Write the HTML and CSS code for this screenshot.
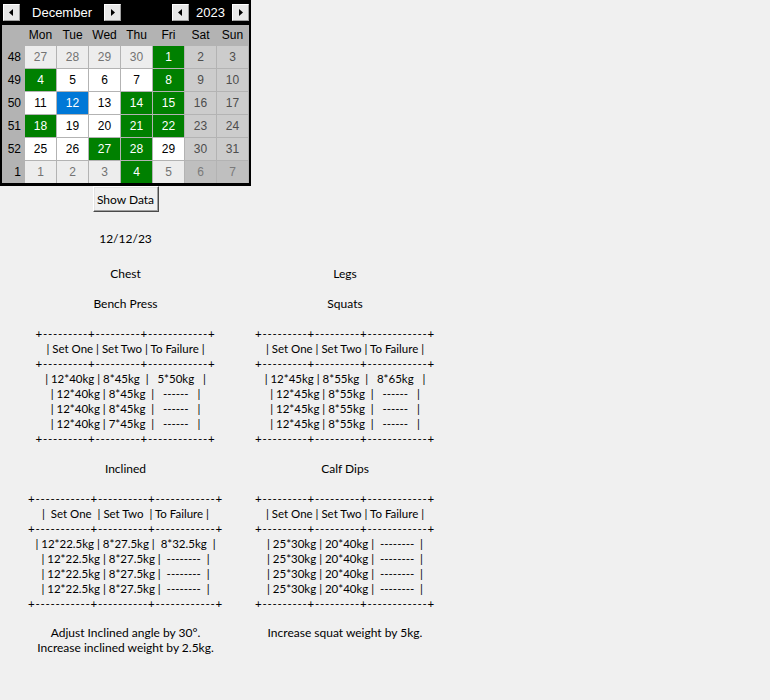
FILE: index.html
```
<!DOCTYPE html>
<html>
<head>
<meta charset="utf-8">
<link rel="stylesheet" href="styles.css">
</head>
<body>
<div class="app">
  <div class="calendar">
    <div class="cal-head">
      <div class="arrow-btn"><svg width="15" height="15" viewBox="0 0 15 15"><polygon points="9,4 5,7.5 9,11" fill="#000"/></svg></div>
      <div class="month-label">December</div>
      <div class="arrow-btn"><svg width="15" height="15" viewBox="0 0 15 15"><polygon points="6,4 10,7.5 6,11" fill="#000"/></svg></div>
      <div class="head-spacer"></div>
      <div class="arrow-btn"><svg width="15" height="15" viewBox="0 0 15 15"><polygon points="9,4 5,7.5 9,11" fill="#000"/></svg></div>
      <div class="year-label">2023</div>
      <div class="arrow-btn"><svg width="15" height="15" viewBox="0 0 15 15"><polygon points="6,4 10,7.5 6,11" fill="#000"/></svg></div>
    </div>
    <div class="cal-grid">
      <div class="hd"></div>
      <div class="hd">Mon</div><div class="hd">Tue</div><div class="hd">Wed</div><div class="hd">Thu</div><div class="hd">Fri</div><div class="hd">Sat</div><div class="hd">Sun</div>

      <div class="wk">48</div>
      <div class="d om">27</div><div class="d om">28</div><div class="d om">29</div><div class="d om">30</div><div class="d hl">1</div><div class="d we">2</div><div class="d we">3</div>

      <div class="wk">49</div>
      <div class="d hl">4</div><div class="d">5</div><div class="d">6</div><div class="d">7</div><div class="d hl">8</div><div class="d we">9</div><div class="d we">10</div>

      <div class="wk">50</div>
      <div class="d">11</div><div class="d sel">12</div><div class="d">13</div><div class="d hl">14</div><div class="d hl">15</div><div class="d we">16</div><div class="d we">17</div>

      <div class="wk">51</div>
      <div class="d hl">18</div><div class="d">19</div><div class="d">20</div><div class="d hl">21</div><div class="d hl">22</div><div class="d we">23</div><div class="d we">24</div>

      <div class="wk">52</div>
      <div class="d">25</div><div class="d">26</div><div class="d hl">27</div><div class="d hl">28</div><div class="d">29</div><div class="d we">30</div><div class="d we">31</div>

      <div class="wk">1</div>
      <div class="d om">1</div><div class="d om">2</div><div class="d om">3</div><div class="d hl">4</div><div class="d om">5</div><div class="d omwe">6</div><div class="d omwe">7</div>
    </div>
  </div>
  <div class="cell-empty"></div>

  <div class="show-btn">Show Data</div>
  <div class="cell-empty"></div>

  <div class="lbl">12/12/23</div>
  <div class="cell-empty"></div>

  <div class="lbl">Chest</div>
  <div class="lbl">Legs</div>

  <div class="lbl">Bench Press</div>
  <div class="lbl">Squats</div>

  <div class="table-text"><span class="rule">+---------+---------+------------+</span>
| Set One | Set Two | To Failure |
<span class="rule">+---------+---------+------------+</span>
| 12*40kg | 8*45kg  |   5*50kg   |
| 12*40kg | 8*45kg  |   ------   |
| 12*40kg | 8*45kg  |   ------   |
| 12*40kg | 7*45kg  |   ------   |
<span class="rule">+---------+---------+------------+</span></div>
  <div class="table-text"><span class="rule">+---------+---------+------------+</span>
| Set One | Set Two | To Failure |
<span class="rule">+---------+---------+------------+</span>
| 12*45kg | 8*55kg  |   8*65kg   |
| 12*45kg | 8*55kg  |   ------   |
| 12*45kg | 8*55kg  |   ------   |
| 12*45kg | 8*55kg  |   ------   |
<span class="rule">+---------+---------+------------+</span></div>

  <div class="lbl">Inclined</div>
  <div class="lbl">Calf Dips</div>

  <div class="table-text"><span class="rule">+-----------+----------+------------+</span>
|  Set One  | Set Two  | To Failure |
<span class="rule">+-----------+----------+------------+</span>
| 12*22.5kg | 8*27.5kg |  8*32.5kg  |
| 12*22.5kg | 8*27.5kg |  --------  |
| 12*22.5kg | 8*27.5kg |  --------  |
| 12*22.5kg | 8*27.5kg |  --------  |
<span class="rule">+-----------+----------+------------+</span></div>
  <div class="table-text"><span class="rule">+---------+---------+------------+</span>
| Set One | Set Two | To Failure |
<span class="rule">+---------+---------+------------+</span>
| 25*30kg | 20*40kg |  --------  |
| 25*30kg | 20*40kg |  --------  |
| 25*30kg | 20*40kg |  --------  |
| 25*30kg | 20*40kg |  --------  |
<span class="rule">+---------+---------+------------+</span></div>

  <div class="note">Adjust Inclined angle by 30°.
Increase inclined weight by 2.5kg.</div>
  <div class="note">Increase squat weight by 5kg.</div>
</div>
</body>
</html>
```
FILE: styles.css
```
html, body {
  margin: 0;
  padding: 0;
  background: #f0f0f0;
}

body {
  width: 770px;
  height: 700px;
  font-family: Lato, "Noto Sans", sans-serif;
  font-size: 12px;
  color: #000;
}

.app {
  display: grid;
  grid-template-columns: 251px 188px;
  grid-template-rows: 186px 26px 52px 18px 42px 123px 42px 123px auto;
  justify-items: center;
  align-items: center;
}

/* ---------- calendar ---------- */
.calendar {
  width: 251px;
  box-sizing: border-box;
  border: 2px solid #000;
  border-bottom-width: 3px;
  background: #000;
  align-self: start;
  font-family: "Liberation Sans", Arial, sans-serif;
  font-size: 12px;
}

.cal-head {
  display: flex;
  align-items: flex-start;
  height: 23px;
  box-sizing: border-box;
  padding: 2px 0 0 1px;
  background: #000;
  color: #fff;
}

.arrow-btn {
  width: 17px;
  height: 17px;
  box-sizing: border-box;
  background: #e8e8e8;
  border: 1px solid;
  border-color: #ffffff #a0a0a0 #a0a0a0 #ffffff;
  display: flex;
  align-items: center;
  justify-content: center;
}

.arrow-btn svg {
  display: block;
}

.month-label {
  width: 84px;
  text-align: center;
  font-size: 13px;
  line-height: 17px;
}

.year-label {
  width: 43px;
  text-align: center;
  font-size: 13px;
  line-height: 17px;
}

.head-spacer {
  flex: 1;
}

.cal-grid {
  display: grid;
  grid-template-columns: 22px repeat(7, 31px);
  grid-template-rows: 20px repeat(6, 22px);
  gap: 1px;
  padding-right: 1px;
  background: #b3b3b3;
}

.hd {
  background: #b3b3b3;
  color: #000;
  display: flex;
  align-items: center;
  justify-content: center;
}

.wk {
  background: #b3b3b3;
  color: #000;
  display: flex;
  align-items: center;
  justify-content: flex-end;
  padding-right: 3px;
}

.d {
  background: #ffffff;
  color: #000;
  display: flex;
  align-items: center;
  justify-content: center;
}

.d.we {
  background: #cccccc;
  color: #4d4d4d;
}

.d.om {
  background: #ededed;
  color: #737373;
}

.d.omwe {
  background: #bfbfbf;
  color: #7a7a7a;
}

.d.hl {
  background: #008000;
  color: #ffffff;
}

.d.sel {
  background: #0078d7;
  color: #ffffff;
}

/* ---------- content ---------- */
.show-btn {
  width: 66px;
  height: 26px;
  box-sizing: border-box;
  background: #f0f0f0;
  border: 1px solid;
  border-color: #ffffff #4a4a4a #4a4a4a #ffffff;
  box-shadow: inset -1px -1px 0 #a0a0a0, inset 1px 1px 0 #e3e3e3;
  display: flex;
  align-items: center;
  justify-content: center;
  line-height: 15px;
}

.lbl {
  line-height: 15px;
  text-align: center;
}

.table-text {
  white-space: pre;
  text-align: center;
  font-size: 11.5px;
  line-height: 15px;
}

.rule {
  letter-spacing: 0.74px;
}

.note {
  white-space: pre;
  text-align: center;
  line-height: 15px;
  align-self: start;
  margin-top: 13px;
}
```
